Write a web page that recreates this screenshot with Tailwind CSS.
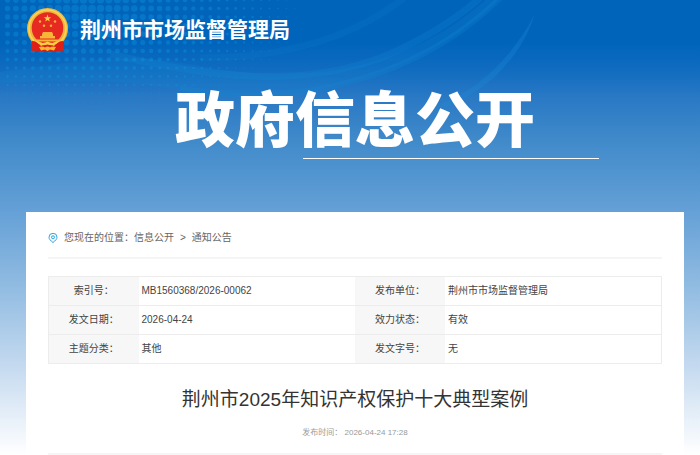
<!DOCTYPE html>
<html lang="zh-CN">
<head>
    <meta charset="UTF-8">
    <meta name="viewport" content="width=device-width, initial-scale=1.0">
    <title>荆州市2025年知识产权保护十大典型案例</title>
    <script src="https://cdn.jsdelivr.net/npm/@tailwindcss/browser@4"></script>
</head>
<body class="font-['Liberation_Sans','Noto_Sans_CJK_SC',sans-serif] text-[10px] text-[#444]">
    <div class="relative isolate min-h-screen overflow-hidden bg-[linear-gradient(#0064bb_0px,#0064bb_42px,#0f6bbf_68px,#2a79c5_98px,#408aca_140px,#639fd6_208px,#90bbe1_285px,#c7dbf0_370px,#ffffff_455px)]">
        <!-- Background dots and curves -->
        <svg class="absolute left-0 top-0 -z-10" width="700" height="212" viewBox="0 0 700 212" fill="none" aria-hidden="true">
            <path d="M0 84C60 78 120 80 180 90C290 110 420 80 505 -6L492 -6C410 70 310 86 200 66C120 50 50 66 0 72Z" fill="#1389d2" fill-opacity=".2"/>
            <path d="M110 54C210 78 300 88 380 58C430 38 465 12 482 -4" stroke="#1389d2" stroke-opacity=".25" stroke-width="7"/>
            <path d="M180 88C290 110 420 80 504 -6" stroke="#1389d2" stroke-opacity=".25" stroke-width="6"/>
            <path d="M200 58C280 58 350 40 404 -2" stroke="#1389d2" stroke-opacity=".15" stroke-width="7"/>
            <path d="M440 104C480 88 510 60 535 14C520 60 485 92 445 108Z" fill="#1f8bd6" fill-opacity=".3"/>
            <g id="dots" fill="#0f93dc"></g>
        </svg>

        <header class="flex items-center gap-3 px-[27px] pt-2">
            <svg class="h-11 w-[41px] shrink-0" viewBox="0 0 41 44" role="img" aria-label="国徽">
                <path d="M6 32L5 42L12 43.500L20.500 44L29 43.500L36 42L35 32Z" fill="#d81e17"/>
                <circle cx="20.500" cy="20.500" r="20.500" fill="#eeb63a"/>
                <circle cx="20.500" cy="20.500" r="18.500" fill="none" stroke="#fbd25a" stroke-width="1.500"/>
                <circle cx="20.500" cy="20" r="15.800" fill="#e62a21"/>
                <path d="M20.500 6.500L21.400 9.200H24.200L22 10.900L22.800 13.600L20.500 12L18.200 13.600L19 10.900L16.800 9.200H19.600Z" fill="#ffd23f"/>
                <g fill="#f8b53a">
                    <circle cx="13" cy="13.500" r="1.200"/><circle cx="28" cy="13.500" r="1.200"/>
                    <circle cx="17" cy="17.800" r="1.200"/><circle cx="24" cy="17.800" r="1.200"/>
                    <path d="M15 26L16 24H25L26 26V28H28V30.500H13V28H15Z"/>
                    <path d="M9 31.500H32L30 33.500H11Z"/>
                </g>
                <path d="M5 33Q10 33 14 38Q17 36 20.500 36Q24 36 27 38Q31 33 36 33L37 43L28 42Q24 39 20.500 40Q17 39 13 42L4 43Z" fill="#dc2018"/>
                <path d="M8 32Q15 37 20.500 33.500Q26 37 33 32Q29 39 20.500 36.500Q12 39 8 32Z" fill="#ffcf43"/>
                <path d="M12 39Q16 38 18 39.500Q20.500 37.500 23 39.500Q25 38 29 39L27 42.500L23 41.500L20.500 43L18 41.500L14 42.500Z" fill="#f6b92f"/>
            </svg>
            <a href="#" class="text-[21px] leading-8 font-bold text-white">荆州市市场监督管理局</a>
        </header>

        <div class="flex flex-col items-center pt-[34px] pr-[26px] pl-[36px]">
            <div class="w-full pl-[139px] text-[60px] leading-[72px] font-black text-white">政府信息公开</div>
            <div class="mr-[75px] h-px w-[296px] self-end bg-white"></div>
        </div>

        <main class="mt-[53px] mr-4 ml-[26px] min-h-[243px] bg-white px-[22px]">
            <nav class="flex h-[47px] items-center border-b-2 border-[#f5f5f5] pt-1.5 text-[#666]" aria-label="您现在的位置">
                <svg class="mr-1.5 size-[10px]" viewBox="0 0 9 10" fill="none" stroke="#2ba3e0" aria-hidden="true">
                    <path d="M4.500 9.500C2 7.500 .5 6 .5 4.300A4 4 0 0 1 8.500 4.300C8.500 6 7 7.500 4.500 9.500Z"/>
                    <circle cx="4.500" cy="4.300" r="1.500"/>
                </svg>
                <span>您现在的位置：</span>
                <a href="#">信息公开</a>
                <span class="mx-1.5">&gt;</span>
                <a href="#">通知公告</a>
            </nav>

            <table class="mt-[17px] w-full table-fixed border border-[#ececec] leading-4">
                <colgroup>
                    <col class="w-[90px]"><col><col class="w-[90px]"><col>
                </colgroup>
                <tbody>
                    <tr class="h-[29px] border-b border-[#ececec]">
                        <th class="bg-[#f7f7f7] text-center font-normal">索引号：</th>
                        <td class="pl-[3px]">MB1560368/2026-00062</td>
                        <th class="bg-[#f7f7f7] text-center font-normal">发布单位：</th>
                        <td class="pl-[3px]">荆州市市场监督管理局</td>
                    </tr>
                    <tr class="h-[29px] border-b border-[#ececec]">
                        <th class="bg-[#f7f7f7] text-center font-normal">发文日期：</th>
                        <td class="pl-[3px]">2026-04-24</td>
                        <th class="bg-[#f7f7f7] text-center font-normal">效力状态：</th>
                        <td class="pl-[3px]">有效</td>
                    </tr>
                    <tr class="h-[29px]">
                        <th class="bg-[#f7f7f7] text-center font-normal">主题分类：</th>
                        <td class="pl-[3px]">其他</td>
                        <th class="bg-[#f7f7f7] text-center font-normal">发文字号：</th>
                        <td class="pl-[3px]">无</td>
                    </tr>
                </tbody>
            </table>

            <h1 class="mt-[22px] text-center text-[19px] leading-7 font-normal text-[#333]">荆州市2025年知识产权保护十大典型案例</h1>
            <p class="mt-[11px] border-b-2 border-[#f5f5f5] pb-3 text-center text-[8px] leading-4 text-[#999]">发布时间： 2026-04-24 17:28</p>
        </main>
    </div>

    <script>
        // Halftone dots, smaller towards the right and the bottom
        const dots = document.getElementById('dots');
        for (let row = 0; row < 14; row++) {
            for (let col = 0; col < 37; col++) {
                const x = 7.5 + col * 8.45;
                const y = row * 8.5;
                const dist = Math.hypot((x - 85) / 240, (y - 10) / 120);
                const r = 4 * (1 - dist);
                if (r < 0.4) continue;
                const dot = document.createElementNS('http://www.w3.org/2000/svg', 'circle');
                dot.setAttribute('cx', x);
                dot.setAttribute('cy', y);
                dot.setAttribute('r', r);
                dot.setAttribute('opacity', 0.4);
                dots.appendChild(dot);
            }
        }
    </script>
</body>
</html>
